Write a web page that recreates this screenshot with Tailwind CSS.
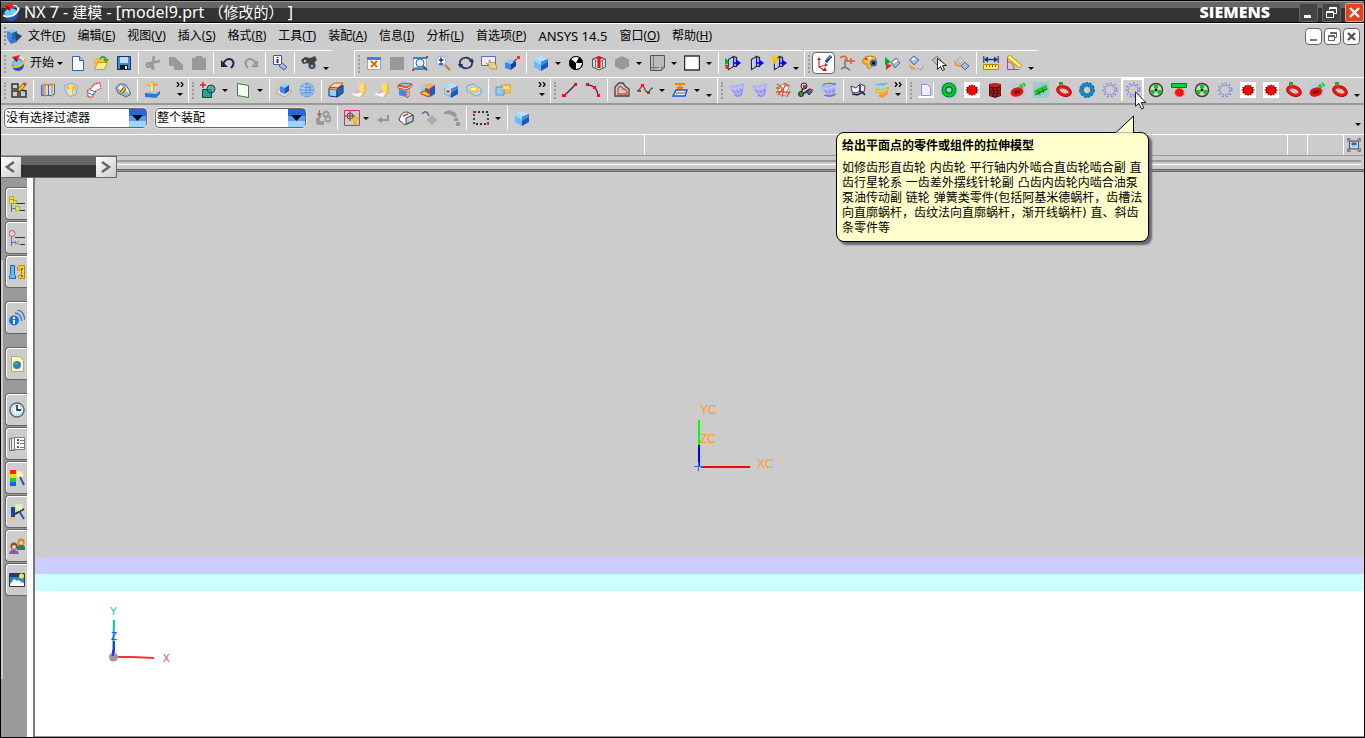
<!DOCTYPE html>
<html lang="zh-CN">
<head>
  <meta charset="UTF-8" />
  <meta name="viewport" content="width=device-width, initial-scale=1.0" />
  <title>NX 7 - 建模 - [model9.prt]</title>
  <script src="https://cdn.jsdelivr.net/npm/@tailwindcss/browser@4"></script>
</head>
<body class="bg-[#cccccc] text-black text-xs font-['Noto_Sans','Noto_Sans_CJK_SC',sans-serif]">
<div class="relative h-screen flex flex-col border border-black overflow-hidden">

  <!-- Title bar -->
  <header class="h-[22px] shrink-0 flex items-center bg-linear-to-b from-[#666666] from-30% to-[#333333] to-30% border-t border-t-[#999999] border-b border-b-black text-white">
    <svg data-icon="nx" viewBox="0 0 16 16" class="size-[18px] ml-px"></svg>
    <h1 class="ml-1 text-base leading-5 whitespace-pre">NX 7 - <span class="text-[15px]">建模</span> - [model9.prt <span class="text-[15px]">（修改的）</span> ]</h1>
    <span class="ml-auto mr-[29px] font-['Open_Sans'] font-extrabold text-base leading-5">SIEMENS</span>
    <div class="flex gap-1">
      <button aria-label="最小化" class="size-[19px] border border-[#666666] rounded-xs bg-[#444444]"><svg viewBox="0 0 17 17"><path fill="#fff" d="M4 11h7v3H4z"/></svg></button>
      <button aria-label="还原" class="size-[19px] border border-[#666666] rounded-xs bg-[#444444]"><svg viewBox="0 0 17 17" fill="none" stroke="#fff"><path d="M6.500 6V3.500h7v6H11M6 4.500h7M3.500 7.500h7v6h-7zM3 8.500h7"/></svg></button>
      <button aria-label="关闭" class="size-[19px] border border-[#ff9980] rounded-xs bg-[#dd4422]"><svg viewBox="0 0 17 17"><path stroke="#fff" stroke-width="2.400" d="M4 4l9 9M13 4l-9 9"/></svg></button>
    </div>
  </header>

  <!-- Menu bar -->
  <nav class="h-[27px] shrink-0 flex items-center border-t border-white pl-[3px] pr-1 pb-0.5">
    <span class="w-0.5 h-[18px] border-l-2 border-dotted border-[#888888]"></span>
    <svg data-icon="part" viewBox="0 0 16 16" class="size-4 mr-1.5"></svg>
    <div class="flex gap-3 whitespace-nowrap items-center">
      <a href="#">文件(<u>F</u>)</a>
      <a href="#">编辑(<u>E</u>)</a>
      <a href="#">视图(<u>V</u>)</a>
      <a href="#">插入(<u>S</u>)</a>
      <a href="#">格式(<u>R</u>)</a>
      <a href="#">工具(<u>T</u>)</a>
      <a href="#">装配(<u>A</u>)</a>
      <a href="#">信息(<u>I</u>)</a>
      <a href="#">分析(<u>L</u>)</a>
      <a href="#">首选项(<u>P</u>)</a>
      <a href="#" class="text-[13px] leading-4">ANSYS 14.5</a>
      <a href="#">窗口(<u>O</u>)</a>
      <a href="#">帮助(<u>H</u>)</a>
    </div>
    <div class="ml-auto flex gap-0.5">
      <button aria-label="最小化部件" class="size-[17px] border border-[#666666] rounded bg-white"><svg viewBox="0 0 15 15"><path fill="#777" d="M4 10h7v2H4z"/></svg></button>
      <button aria-label="还原部件" class="size-[17px] border border-[#666666] rounded bg-white"><svg viewBox="0 0 15 15" fill="none" stroke="#666"><path d="M5.500 5V3.500h6v5H10M3.500 6.500h6v5h-6zM3 7.500h7M5 4.500h6"/></svg></button>
      <button aria-label="关闭部件" class="size-[17px] border border-[#666666] rounded bg-white"><svg viewBox="0 0 15 15"><path stroke="#555" stroke-width="2.400" d="M4 4l7 7M11 4l-7 7"/></svg></button>
    </div>
  </nav>

  <!-- Toolbars: | separator, v drop-down, _ options, >> more -->
  <div class="h-[27px] shrink-0 flex gap-0.5">
    <div class="flex border-t border-white pl-[6px] pb-0.5 relative mr-5" data-items="start v new open save | cut copy paste | undo redo | info | binoculars _"></div>
    <div class="flex border-t border-l border-white pl-[7px] pb-0.5 relative" data-items="fit square zoombox zoom rotate pan persp | cube v bw section hex v sheet v white v | clipin clip clipnew _"></div>
    <div class="flex border-t border-l border-white pl-[7px] pb-0.5 relative" data-items="wcs* axes palette show hide pick swap | measure angle _"></div>
  </div>
  <div class="h-[28px] shrink-0 flex gap-0.5 border-t border-t-white border-b-2 border-b-[#999999]">
    <div class="flex pl-[6px] pb-px relative" data-items="sketch | datum bolt sweep | gauge | table - >>"></div>
    <div class="flex border-l border-white pl-[7px] pb-px relative" data-items="addshape v plane v | pad sphere | block sheet1 sheet1 trim pocket hole boss | unite - - >>"></div>
    <div class="flex border-l border-white pl-[7px] pb-px relative" data-items="line arc | offset spline v project v _"></div>
    <div class="flex border-l border-white pl-[7px] pb-px relative" data-items="surf surf mesh nodes surf2 | curve layers >>"></div>
    <div class="flex border-l border-white pl-[7px] pb-px relative" data-items="page greenring redgear redblock redgreen worm ring bluering dots dots^ wheel rack wheel dots redgear redgear ring redgreen ring _"></div>
  </div>

  <!-- Selection bar -->
  <div class="h-[29px] shrink-0 flex items-center pl-[3px] pb-[3px]">
    <div class="relative w-[143px] h-5 mr-2">
      <select aria-label="类型过滤器" class="appearance-none w-full h-5 bg-white border border-[#666666] rounded-sm text-xs leading-4 pl-px outline outline-white/50"><option>没有选择过滤器</option></select>
      <svg viewBox="0 0 17 18" class="absolute right-px top-px w-[17px] h-[18px] pointer-events-none"><path fill="#2468d8" d="M0 0h17v7H0z"/><path fill="#58a0ec" d="M0 7h17v5H0z"/><path fill="#9cd4fc" d="M0 12h17v6H0z"/><path d="M3 6h11L8.500 12z"/></svg>
    </div>
    <div class="relative w-[151px] h-5 mr-[5px]">
      <select aria-label="选择范围" class="appearance-none w-full h-5 bg-white border border-[#666666] rounded-sm text-xs leading-4 pl-px outline outline-white/50"><option>整个装配</option></select>
      <svg viewBox="0 0 17 18" class="absolute right-px top-px w-[17px] h-[18px] pointer-events-none"><path fill="#2468d8" d="M0 0h17v7H0z"/><path fill="#58a0ec" d="M0 7h17v5H0z"/><path fill="#9cd4fc" d="M0 12h17v6H0z"/><path d="M3 6h11L8.500 12z"/></svg>
    </div>
    <div class="flex h-[26px]" data-items="filter | snap n back solid undoaxis handles | rect v | cube"></div>
    <div class="flex h-[26px] ml-auto" data-items="_"></div>
  </div>

  <!-- Cue and status line -->
  <div class="h-[22px] shrink-0 flex border-t border-white border-b border-b-[#999999]">
    <div class="flex-1 border-r border-white"></div>
    <div class="flex-1 border-r border-white"></div>
    <div class="w-5 border-r border-white"></div>
    <div class="w-9 border-r border-white"></div>
    <button aria-label="全屏" class="w-5 flex items-center justify-center"><svg data-icon="full" viewBox="0 0 16 16" class="size-[14px]"></svg></button>
  </div>
  <div class="h-4 shrink-0 relative pt-1">
    <div class="h-[5px] mr-[3px] border-t-2 border-t-[#999999] border-b border-b-white"></div>
    <div class="h-[3px] mt-1 bg-[#999999] border-y border-[#666666]"></div>
    <div class="absolute left-0 top-0 z-10 w-[116px] h-[22px] flex border border-[#666666] border-l-0">
      <button aria-label="上一个" class="w-5 bg-linear-to-br from-white to-[#cccccc]"><svg viewBox="0 0 20 20"><path fill="none" stroke="#666" stroke-width="2.500" d="M13 5l-7 5 7 5"/></svg></button>
      <div class="flex-1 bg-linear-to-b from-[#666666] from-40% to-[#333333] to-40%"></div>
      <button aria-label="下一个" class="w-5 bg-linear-to-br from-white to-[#cccccc]"><svg viewBox="0 0 20 20"><path fill="none" stroke="#666" stroke-width="2.500" d="M6 5l7 5-7 5"/></svg></button>
    </div>
  </div>

  <main class="flex-1 min-h-0 flex">
    <!-- Resource bar -->
    <aside class="w-[26px] shrink-0 bg-[#999999] pl-1 pt-[15px] flex flex-col gap-px relative">
      <div class="absolute left-0 top-[88px] bottom-[58px] w-0.5 bg-[#cccccc]"></div>
      <button data-side="nav1"></button>
      <button data-side="nav2"></button>
      <button data-side="reuse"></button>
      <button data-side="web" class="mt-3"></button>
      <button data-side="globe" class="mt-3"></button>
      <button data-side="clock" class="mt-3"></button>
      <button data-side="list"></button>
      <button data-side="rainbow"></button>
      <button data-side="wand"></button>
      <button data-side="people"></button>
      <button data-side="picture"></button>
    </aside>
    <div class="w-2 shrink-0 bg-white border-r-2 border-[#777777]"></div>

    <!-- Graphics window -->
    <section class="flex-1 relative flex flex-col border-b border-[#999999]">
      <div class="flex-385 bg-[#cccccc]"></div>
      <div class="flex-17 bg-[#ccccff]"></div>
      <div class="flex-17 bg-[#ccffff]"></div>
      <div class="flex-145 bg-white"></div>
      <svg class="absolute left-1/2 top-56 -ml-[6px] w-[90px] h-[75px]" viewBox="0 0 90 75" fill="none">
        <path stroke="#00ff00" stroke-width="2" d="M5 24v26"/>
        <path stroke="#0000ff" stroke-width="2" d="M5 49v21"/>
        <path stroke="#ff0000" stroke-width="2" d="M7 71h49"/>
        <path stroke="#3366cc" d="M0 70.500h9M4.500 66v9"/>
        <g fill="#ff9933" class="font-['Liberation_Sans'] text-xs"><text x="6" y="18">YC</text><text x="6" y="47">ZC</text><text x="63" y="72">XC</text></g>
      </svg>
      <svg class="absolute left-[70px] bottom-[70px] w-[70px] h-[62px]" viewBox="0 0 70 62" fill="none">
        <path stroke="#00cc99" stroke-width="2" d="M9 16l-1 36"/>
        <path stroke="#3333ff" stroke-width="2" d="M9 37v15"/>
        <circle cx="8.500" cy="53" r="4.500" fill="#999999"/>
        <path stroke="#3333ff" stroke-width="2" d="M8 46v6"/>
        <path stroke="#ff3333" stroke-width="2" d="M13 53h14l22 1"/>
        <g class="font-['Liberation_Sans'] text-[10px]"><text x="5" y="11" fill="#00cc99">Y</text><text x="6" y="36" fill="#3333ff">Z</text><text x="58" y="58" fill="#ff3333">X</text></g>
      </svg>
    </section>
  </main>

  <!-- Tooltip -->
  <div role="tooltip" class="absolute z-20 left-[835px] top-[131px] w-[313px] rounded-lg border border-black bg-[#ffffcc] pl-[5px] py-[5px] leading-[15px] font-['DejaVu_Sans','Noto_Sans_CJK_SC',sans-serif] shadow-[3px_3px_2px_#666677]">
    <svg class="absolute right-[13px] -top-[18px] w-5 h-[19px]" viewBox="0 0 20 19"><path fill="#ffffcc" stroke="#000" d="M0 17.500h1L18.500 1v16.500"/><path stroke="#ffffcc" stroke-width="2" d="M1 18.500h17"/></svg>
    <p class="font-bold py-px mb-[6px]">给出平面点的零件或组件的拉伸模型</p>
    <p class="whitespace-nowrap">如修齿形直齿轮 内齿轮 平行轴内外啮合直齿轮啮合副 直<br>齿行星轮系 一齿差外摆线针轮副 凸齿内齿轮内啮合油泵<br>泵油传动副 链轮 弹簧类零件(包括阿基米德蜗杆，齿槽法<br>向直廓蜗杆，齿纹法向直廓蜗杆，渐开线蜗杆) 直、斜齿<br>条零件等</p>
  </div>

  <!-- Mouse pointer -->
  <svg class="absolute z-30 left-[1134px] top-[90px] w-3 h-[19px]" viewBox="0 0 12 19"><path fill="#fff" stroke="#223" d="M.5.800v14.500l3.400-3 2.600 5.700 2.300-1-2.600-5.500h4.600z"/></svg>
</div>

<script>
  const cube = '<path fill="#bdf" d="M1 3l8-2 6 3-7 3z"/><path fill="#6bf" d="M1 3l7 4v9l-7-4z"/><path fill="#25b" d="M8 7l7-3v8l-7 4z"/><path fill="#9df" d="M1 3l7 4v3L1 6z"/><path fill="#48d" d="M8 7l7-3v3l-7 4z"/>';
  const blade = '<path fill="#aaf" d="M0 4c5 0 10-1 15-3v4c-1 3-2 5-2 8-2 2-5 2-7 1 0-2-1-4-2-4C2 9 1 7 0 4z"/><path fill="#88e" d="M3 9c4 1 8 0 11-2l-1 6c-2 2-5 2-7 1 0-2-1-4-3-5z"/><path stroke="#dde" stroke-width=".6" fill="none" d="M1 6c5 1 10 0 14-2M5 11c3 1 5 1 8-1M5 4c0 3 3 6 4 10M10 3c-1 3 1 6 1 11"/>';
  const door = '<path fill="#dfe8ff" stroke="#225" stroke-width="1.200" d="M3.500 4.500l5-3v10l-5 3z"/><path fill="#9be" stroke="#225" stroke-width="1.200" d="M8.500 1.500l3 1v9l-3 0z"/><path fill="#bcd" d="M5 5l2-1v8l-2 1z"/><path stroke="#00f" stroke-width="1.500" d="M8 8h6"/><path fill="#00f" d="M12 5l4 3-4 3z"/>';
  const chip = '<path fill="#9be" stroke="#667" d="M6.500 7L11 3l4 5-5 5z"/><path stroke="#fff" stroke-width="2" d="M8 8l4-3"/>';
  const ring = '<ellipse cx="8" cy="9" rx="6.500" ry="4" fill="none" stroke="#900" stroke-width="3" transform="rotate(20 8 9)"/><ellipse cx="8" cy="9" rx="6" ry="3.500" fill="none" stroke="#f11" stroke-width="2.400" transform="rotate(20 8 9)"/>';
  const globe = '<circle cx="8" cy="10" r="6" fill="#25b"/><path fill="#6cf" d="M2 9c1-4 8-6 11-2 1 2-2 5-5 5s-5-1-6-3z"/><path fill="none" stroke="#fff" d="M10 2c3 0 4 2 4 4"/><path fill="#e22" d="M2 2l8-2-3 7z"/><path fill="#a00" d="M2 2l5 5 0-3z"/>';
  const star = 'M8 1l1.200 2.400L11.500 2l.2 2.600 2.800-.1-1.200 2.400L16 8l-2.500 1.200 1.200 2.500-2.700 0-.3 2.600-2.300-1.500L8 15l-1.300-2.200-2.300 1.500-.3-2.600-2.700 0 1.100-2.500L0 8l2.500-1.200L1.400 4.500l2.700.1.300-2.600 2.400 1.400z';

  const icons = {
    nx: globe + '<path fill="none" stroke="#eef" stroke-width="1.700" d="M1 11c6 3 13-1 14-7"/>',
    part: '<path fill="#8cf" d="M1 3l6-2 4 2-5 2z"/><path fill="#48d" d="M1 3l5 2v9l-5-3z"/><path fill="#26b" d="M6 5l5-2v9l-5 2z"/><path fill="#345" d="M9 4l7 4-6 6z"/><path fill="#37d" d="M2 12l8-1 1 3-6 2z"/>',
    start: globe + '<path fill="none" stroke="#fb2" stroke-width="1.700" d="M1 11c6 3 13-1 14-7"/>',
    new: '<path fill="#fff" stroke="#36a" d="M2.500 1.500h7l4 4v10h-11z"/><path fill="#9bf" stroke="#36a" d="M9.500 1.500v4h4"/>',
    open: '<path fill="#eb5" d="M1 5l2-2h4l1 2h5v9H2z"/><path fill="#fe8" stroke="#c92" d="M1.500 14.500l3-7h10l-3 7z"/><path fill="none" stroke="#3a2" stroke-width="2" d="M7 4c2-3 4-3 6 0"/><path fill="#3a2" d="M10 4h6l-3 4z"/>',
    save: '<path fill="#48c" stroke="#136" d="M1.500 1.500h13v13h-13z"/><path fill="#bdf" d="M4 2h8v6H4z"/><path fill="#113" d="M4 10h8v4H4z"/><path fill="#fff" d="M9 11h2v3H9z"/>',
    cut: '<path stroke="#999" stroke-width="2.500" d="M9 1L7 13M2 9l13-3"/><circle cx="3.500" cy="10" r="2" fill="none" stroke="#999" stroke-width="2"/><circle cx="8" cy="13" r="2" fill="#999"/>',
    copy: '<path fill="#999" d="M1 2h6l3 3v6H1zM6 6h5l4 4v5H6z"/>',
    paste: '<path fill="#999" d="M1 3h3l1-2h6l1 2h3v12H1z"/>',
    undo: '<path fill="none" stroke="#225" stroke-width="2" d="M3 9c2-5 6-6 9-4 2 2 2 5-1 8"/><path fill="#225" d="M1 5v7h7z"/>',
    redo: '<path fill="none" stroke="#999" stroke-width="2" d="M13 9c-2-5-6-6-9-4-2 2-2 5 1 8"/><path fill="#aaa" stroke="#888" d="M14.500 6v5.500H9z"/>',
    info: '<path fill="#fff" stroke="#557" d="M1.500.500h8v9h-8z"/><path stroke="#22a" stroke-width="2" d="M5.500 4v4M5.500 2v1"/><path fill="#9be" stroke="#557" d="M7 11l3-3 5 4-3 3z"/>',
    binoculars: '<path fill="#444" d="M0 5l4-3 5 1 5-2 2 4-3 3-4 1-4-1-3 1z"/><circle cx="4" cy="6" r="2" fill="#bcd" stroke="#222"/><circle cx="11" cy="10.500" r="3.500" fill="#345"/><circle cx="11" cy="11" r="1.500" fill="#8ab"/>',
    fit: '<path fill="#fff" stroke="#8ad" d="M1.500 2.500h13v12h-13z"/><path fill="#38d" d="M1 2h14v3H1z"/><path stroke="#e60" stroke-width="2" d="M5 6l6 6M11 6l-6 6"/>',
    square: '<path fill="#999" d="M1 2h14v13H1z"/>',
    zoombox: '<path fill="#fff" stroke="#8ad" d="M1.500 3.500h13v9h-13z"/><path fill="#38d" d="M1 2h14v2H1zM1 13h14v2H1z"/><circle cx="8" cy="8" r="4" fill="#def" stroke="#556"/><path stroke="#555" stroke-width="2" d="M11 11l4 4"/><path fill="#e22" d="M0 14h2v2H0zM14 1h2v2h-2z"/>',
    zoom: '<circle cx="6" cy="6" r="4.800" fill="#fff" stroke="#9be" stroke-width="1.500"/><path stroke="#136" stroke-width="1.500" d="M6 2.500v5M3.500 5h5M4 9h4"/><path stroke="#b84" stroke-width="2.400" d="M10 10l5 5"/>',
    rotate: '<path fill="none" stroke="#236" stroke-width="1.800" d="M2 9c-1-6 8-9 11-3M14 7c1 6-8 9-11 3"/><path fill="#236" d="M11 7h5l-2-4zM5 9H0l2 4z"/>',
    pan: '<path fill="#eef" stroke="#66a" d="M.5 1.500h14v9H.500z"/><path fill="#ec9" stroke="#a73" stroke-width=".7" d="M5 8l3 2V5l1 0 1 3 3-1 2 3 1 4h-6z"/>',
    persp: '<path fill="#8cf" d="M1 7l5-3 6 1-5 3z"/><path fill="#48d" d="M1 7l6 2v6l-6-2z"/><path fill="#149" d="M7 9l5-3v5l-5 4z"/><path stroke="#333" d="M9 7l5-4"/><path fill="#e32" d="M13 1h3v3h-3z"/>',
    cube,
    bw: '<circle cx="8" cy="8" r="7"/><path fill="#fff" d="M8 8L3 4c2-3 7-3 8-2L8 8l6 0c0 4-3 6-6 6z"/><circle cx="8" cy="8" r="6.500" fill="none" stroke="#000"/>',
    section: '<path fill="#ddd" stroke="#555" d="M1.500 4L8 1.500 14.500 4v8L8 15l-6.500-3z"/><path fill="none" stroke="#777" d="M1.500 4L8 7l6.500-3M4.500 6v7M11.500 6v7"/><path stroke="#e11" stroke-width="3" d="M8 4v9"/><path fill="#e11" d="M4 4l4-3 4 3z"/>',
    hex: '<path fill="#999" d="M1 4.500L8 1l7 3.500v7L8 15l-7-3.500z"/>',
    sheet: '<path fill="#bbb" stroke="#555" d="M1.500.500h14v12l-3 3h-11z"/><path fill="none" stroke="#777" d="M4.500 1v14M12.500 15v-3h3M2 12.500h8"/>',
    white: '<path fill="#fff" stroke="#333" stroke-width="1.500" d="M.5 1h15v14H.500z"/>',
    clip: door,
    clipin: door + '<path fill="#0a2" d="M0 3l5 4-5 3z"/><path fill="#e22" d="M0 10h4v4H1z"/>',
    clipnew: door + '<path stroke="#ec0" stroke-width="1.500" d="M4 0v9M0 4h8M1 1l6 6M7 1L1 7"/>',
    wcs: '<path fill="none" stroke="#c33" stroke-width="1.300" d="M3 5v7l5 3M3 12l7-2"/><path fill="#c22" d="M1 5l2-3 2 3zM6 16l5 0-2-4zM9 8l3 2-3 2z"/><path stroke="#247" stroke-width="3" d="M10 7l5-6"/><path stroke="#48d" stroke-width="2" d="M11 4l4-3"/>',
    axes: '<path fill="none" stroke="#777" stroke-width="1.500" d="M6 4v8l5 3M6 12l-4 2"/><path fill="none" stroke="#e52" stroke-width="1.500" d="M1 3c3-3 6-2 7 1v3M8 6h8M12 3v6"/>',
    palette: '<path fill="#fb3" stroke="#b70" d="M1 5c2-5 12-5 13-1s-3 3-4 6-2 4-4 3 1-4-2-4-4-1-3-4z"/><circle cx="4" cy="4" r="1.300" fill="#e33"/><circle cx="8" cy="3" r="1.300" fill="#fff"/><circle cx="11.500" cy="8" r="3.500" fill="#36b"/><circle cx="11.500" cy="8" r="1.500"/>',
    show: '<path fill="#0a2" d="M0 2l6 5-6 3z"/><path fill="#e22" d="M1 15l6-5-6-1z"/>' + chip,
    hide: '<path fill="#9be" stroke="#667" d="M1.500 5L6 1l5 4-5 5z"/><path stroke="#fff" stroke-width="2" d="M4 5l3-2"/><path fill="none" stroke="#e92" stroke-width="2" d="M2 10c0 3 3 4 5 3"/><path stroke="#88c" fill="none" stroke-dasharray="2 1" d="M9 13l4 2 3-5"/>',
    pick: '<path fill="#bbb" stroke="#888" d="M1 5l5-4 5 5-5 4z"/><path fill="#fff" stroke="#222" d="M6.500 3.500v11l3-3 2 4 2-1-2-4h4z"/>',
    swap: '<path stroke="#99c" stroke-dasharray="2 1" fill="none" d="M3 5l3-3 4 3-4 4z"/><path fill="none" stroke="#e92" stroke-width="2" d="M1 6c0 4 3 6 6 4"/><path fill="#9be" stroke="#667" d="M7 11l4-4 4 4-4 4z"/>',
    measure: '<path stroke="#124a" stroke-width="1.500" d="M.7 1v7M15.300 1v7"/><path stroke="#03a" stroke-width="1.500" d="M2 4.500h12"/><path fill="#03a" d="M1 4.500l4-3v6zM15 4.500l-4-3v6z"/><path fill="#fe6" stroke="#b80" d="M.5 9.500h15v5H.500z"/><path stroke="#850" d="M3.500 10v2M6.500 10v2M9.500 10v2M12.500 10v2"/>',
    angle: '<path fill="none" stroke="#c44" d="M1.500 2v12.500H13M2 7c4 0 6 3 6 7"/><path stroke="#b80" stroke-width="4.500" d="M2 1l13 11"/><path stroke="#fe7" stroke-width="3" d="M2.500 1.500l12 10"/>',
    sketch: '<path fill="none" stroke="#333" stroke-width="1.500" d="M1 2h6v5H1zM1 9h6v6H1zM9 8v7h6V9z"/><path stroke="#950" stroke-width="3.500" d="M7 9l7-7"/><path stroke="#fc3" stroke-width="2" d="M8 8l5-5"/><path fill="#e33" d="M13 0l3 2-2 2-2-2z"/>',
    datum: '<path fill="#cdf" stroke="#46a" d="M1.500 3.500l3-1h10v10l-3 1h-10z"/><path stroke="#e92" stroke-width="1.500" d="M5 1v14M12 1v14M4 3h10"/><path stroke="#46a" d="M3 4v9M8.500 3v10"/>',
    bolt: '<path fill="#bdf" stroke="#8ac" d="M1 4l7-3 7 3-2 8-5 3-5-4z"/><path fill="#fb4" d="M3 4h10v4l-3 1v6l-4-1V8L3 7z"/><path fill="#fe8" d="M6 4h3v9H6z"/>',
    sweep: '<path fill="#fff" d="M2 13c2-6 5-9 12-11l2 4c-6 1-9 4-11 9z"/><path fill="none" stroke="#e44" stroke-width="1.300" stroke-dasharray="2 1" d="M1 9l4-3 4-5 5 0 1 5-5 3-4 6-4 0z"/><path fill="none" stroke="#37a" d="M2 11l6 2M4 8l6 2"/>',
    gauge: '<path fill="#9bc" stroke="#567" d="M1 6c3-6 10-5 12 0l3 6-5 3-8-4z"/><path fill="#fff" d="M3 6l3-3 2 2-2 3zM10 5l3 2 1 4-3-2z"/><path stroke="#840" stroke-width="3.500" d="M6 11l4-5"/><path stroke="#fb3" stroke-width="2" d="M6 11l4-5"/>',
    table: '<path fill="#e92" d="M1 3l7-3 7 3-5 1v6H7V4z"/><path fill="#fe8" d="M7 3h2v8H7zM3 2l5-1 3 1-4 1z"/><path fill="#9cf" d="M1 11l5-2h10l-4 3z"/><path fill="#37c" d="M1 11l11 1v4l-11-1zM12 12l4-3v3l-4 4z"/>',
    addshape: '<path stroke="#d22" stroke-width="1.500" d="M0 3h6M3 0v6"/><path fill="#2aa098" stroke="#144" d="M2.500 7.500h9v8h-9z"/><circle cx="11" cy="7" r="4" fill="#2aa098" fill-opacity=".7" stroke="#144"/>',
    plane: '<path fill="#f4fff4" stroke="#474" d="M2.500 1.500l11 2v12l-11-2z"/>',
    pad: '<path fill="#cdf" stroke="#d96" d="M0 11l4-6 12 4-7 6z"/><path fill="#9cf" d="M4 4l5-3 4 2-4 3z"/><path fill="#48d" d="M4 4l5 2v6l-5-2z"/><path fill="#25a" d="M9 6l4-3v6l-4 3z"/>',
    sphere: '<circle cx="8" cy="8" r="7" fill="#9cf" stroke="#7ad"/><path fill="#bdf" d="M3 5l5-3v6H2z"/><path fill="none" stroke="#68c" d="M7 1v14M1 8h14M7 1c5 3 6 10 1 14M2 4c4 2 9 2 12 0M2 12c4-2 9-2 12 0"/>',
    block: '<path fill="#fda" stroke="#c52" d="M1 5l6-4h8l-5 5z"/><path fill="#9cf" stroke="#137" d="M1 6l8 1v8l-8-1z"/><path fill="#26b" stroke="#137" d="M9 7l6-4v8l-6 4z"/><path fill="#fff" stroke="#d42" d="M1 6h8v2L1 7z"/>',
    sheet1: '<path fill="#fd6" d="M8 1l6 1v8l-4 5-9-2c5-1 8-4 7-12z"/><path fill="#fff" d="M0 12l7-2 5 2-4 3z"/><path fill="#eab" d="M3 11l5-4 1 3-4 2z"/><path fill="none" stroke="#e92" d="M14 2v8l-4 5"/>',
    trim: '<path fill="#8cf" stroke="#c42" d="M1 3l5-2 9 1-5 3z"/><path fill="#fff" stroke="#d42" d="M1 4l9 2 5-4v2l-5 4-9-2z"/><path fill="#48d" d="M2 7l7 2v6l-7-2z"/><path fill="#fff" stroke="#c42" d="M10 8l2-2v8l-2 2z"/>',
    pocket: '<path fill="#fa5" d="M2 4l8-3 5 2-7 3z"/><path fill="#9cf" d="M1 5l2-1 6 2v2L5 7v3L1 9z"/><path fill="#b42" d="M5 6l5 1v5l-5-1z"/><path fill="#fb5" stroke="#a42" d="M1 10l4-1 4 2v4l-8-3z"/><path fill="#35b" d="M10 6l5-3v9l-5 3z"/>',
    hole: cube + '<circle cx="5" cy="9.500" r="2.500" fill="#d62" stroke="#fff"/>',
    boss: '<path fill="#bdf" stroke="#7ac" d="M1 4l7-2 7 5v5l-5 2-9-5z"/><ellipse cx="8" cy="7.500" rx="5" ry="3" fill="#fb4" transform="rotate(10 8 8)"/><ellipse cx="7.500" cy="7" rx="3" ry="1.600" fill="#ff9"/>',
    unite: '<path fill="#fb4" stroke="#e92" d="M6 3h10v8H6z"/><path fill="#8cf" fill-opacity=".8" stroke="#59c" d="M1 5h8v8H1z"/><path fill="#fd8" d="M8 4h6v3H8z"/>',
    line: '<path stroke="#333" stroke-width="1.500" d="M2 14L14 2"/><path fill="#e11" d="M0 12h4v3H0zM12 1h3v3h-3z"/>',
    arc: '<path fill="none" stroke="#333" stroke-width="1.500" d="M2 3c7 0 10 3 11 10"/><path fill="#e11" d="M1 1h3v3H1zM12 12h3v3h-3zM8 4h3v3H8z"/>',
    offset: '<path fill="none" stroke="#444" stroke-width="1.300" d="M1 14V5l4-4h4l2 3 4 3v7z"/><path fill="none" stroke="#d44" stroke-width="1.300" d="M4 12V7c1-4 4-3 5 0 3 0 4 2 4 5z"/>',
    spline: '<path fill="none" stroke="#555" stroke-width="1.300" d="M0 9c3 0 4-6 6-5s2 7 5 6 2-4 5-4"/><path fill="#d22" d="M4 2h3v3H4zM10 9h3v3h-3zM1 8h3v2H1z"/>',
    project: '<path stroke="#e80" stroke-width="2" d="M8 1v7M5 5l3 3 3-3M3 2h10"/><path fill="#def" stroke="#25c" stroke-width="1.500" d="M4 8h11l-2 6H1z"/><path fill="none" stroke="#c33" d="M4 12c3-3 5 1 9-2"/>',
    surf: blade,
    surf2: blade + '<path fill="none" stroke="#48b" stroke-width="1.300" d="M2 3c2-2 7-2 13-1M3 13c5 2 8 2 12-1"/>',
    mesh: '<path fill="#eee" stroke="#999" d="M3 5l5-3 6 3-4 9-6-2z"/><path fill="none" stroke="#d52" stroke-width="1.300" d="M1 6l4 0M2 2c3 2 6 3 5 6l-4 5M9 1l6 3M11 3c-4 3-2 6-4 12M1 10c6 0 9-1 14 1M15 9l-3 6"/>',
    nodes: '<path stroke="#333" stroke-width="1.500" d="M6 4L2 13M3 13l10-6"/><circle cx="6" cy="4" r="3" fill="#ddd" stroke="#222"/><path fill="#d22" d="M5 3h3v3H5z"/><circle cx="3" cy="12" r="2.500" fill="#484" stroke="#222"/><path fill="#55c" stroke="#225" d="M8 9l4-2 3 2-4 4z"/><path fill="#e33" d="M12 7h3v3h-3z"/>',
    curve: '<path fill="#eef" stroke="#445" d="M1 4l5 2 4-4 5 2-1 6-4-1-4 2-4-1z"/><path fill="none" stroke="#224" stroke-width="1.600" d="M2 12c4 0 4 2 7 0s4-2 6 1M10 3v7"/>',
    layers: '<path fill="#6bd" d="M1 3l7-2h8l-6 3z"/><path fill="#9de" d="M1 3l9 1v3L1 5z"/><path fill="#fc4" stroke="#da3" d="M3 7l7 1 5-3v3l-5 3-7-1z"/><path fill="#e94" d="M6 12l4 0 5-3v3l-5 4-4-1z"/>',
    page: '<path fill="#fff" d="M0 0h16v16H0z"/><path fill="#ccc" d="M0 0h15v14H0z"/><path fill="#eef" stroke="#89c" d="M3.500 2.500h6l3 3v8h-9z"/>',
    greenring: '<path fill="#acd" d="M0 0h16v16H0z"/><circle cx="8" cy="8" r="5" fill="#9cc" stroke="#063" stroke-width="5"/><circle cx="8" cy="8" r="5.200" fill="none" stroke="#0c2" stroke-width="3"/>',
    redgear: '<path fill="#fff" d="M0 0h16v16H0z"/><path fill="#700" transform="translate(1 1) scale(.88)" d="' + star + '"/><circle cx="8" cy="8" r="4.500" fill="#f00"/>',
    redblock: '<path fill="#611" d="M2 2h12v12l-6 2-6-2z"/><ellipse cx="8" cy="3" rx="6" ry="2" fill="#b22"/><path stroke="#b22" stroke-width="1.500" stroke-dasharray="2 2" d="M3 7h10M4 10h10M3 13h10"/>',
    redgreen: '<path fill="#bcd" d="M0 0h16v16H0z"/><ellipse cx="7" cy="10" rx="5" ry="3" fill="#711" stroke="#e11" stroke-width="3" transform="rotate(-15 7 10)"/><path stroke="#2c2" stroke-width="4" stroke-dasharray="3 1" d="M10 5l5-3"/>',
    worm: '<path fill="#9cc" d="M0 0h16v16H0z"/><path stroke="#2c2" stroke-width="5" d="M2 11l12-6"/><path stroke="#172" d="M2 13l12-6M5 8l2 5M9 6l2 5"/>',
    ring: ring + '<path fill="#2a2" d="M3 0h4v4H3z"/>',
    bluering: '<circle cx="8" cy="8" r="5.500" fill="none" stroke="#036" stroke-width="4.500" stroke-dasharray="2 1"/><circle cx="8" cy="8" r="5.500" fill="none" stroke="#18c" stroke-width="3.500"/>',
    dots: '<circle cx="8" cy="8" r="5" fill="none" stroke="#66e" stroke-dasharray="2 1"/><circle cx="8" cy="8" r="6.800" fill="none" stroke="#77e" stroke-width="1.500" stroke-dasharray="1.500 2.500"/>',
    wheel: '<circle cx="8" cy="8" r="6.500" fill="#cdc" stroke="#533" stroke-width="1.500"/><circle cx="8" cy="4.500" r="2.300" fill="#0c2"/><circle cx="4.500" cy="10" r="2.300" fill="#0c2"/><circle cx="11.500" cy="10" r="2.300" fill="#0c2"/><circle cx="8" cy="8" r="1.500" fill="#400"/>',
    rack: '<path fill="#0d2" stroke="#073" d="M.5 1.500h15v4H.500z"/><path fill="#f11" transform="translate(3 5) scale(.68)" d="' + star + '"/><circle cx="8.400" cy="10.500" r="4" fill="#f11"/>',
    filter: '<path fill="#999" d="M1 8h4v3h4v4H3l-2-2zM3 3h3v5H3z"/><path stroke="#966" d="M4.500 0v6M2 4h5"/><circle cx="11" cy="4" r="2.500" fill="none" stroke="#999" stroke-width="2"/><circle cx="13" cy="9" r="2.500" fill="none" stroke="#999" stroke-width="2"/>',
    snap: '<path fill="none" stroke="#c36" d="M.5.500h15v15H.500z"/><circle cx="6" cy="6" r="3" fill="none" stroke="#833"/><path stroke="#833" d="M6 1v10M1 6h10"/><path fill="#fc2" stroke="#b80" stroke-width=".5" d="M7 8h8l-3 3v4h-2v-4z"/>',
    back: '<path fill="none" stroke="#899" stroke-width="2" d="M13 5v5H5"/><path fill="#899" d="M2 10l5-3v6z"/>',
    solid: '<path fill="#fff" stroke="#444" d="M1 10c2-6 4-8 8-8l6 3v6l-8 4z"/><path fill="#bcd" stroke="#444" d="M8 14V8l7-3v6z"/><path stroke="#d33" stroke-width="1.500" d="M5 6l5-2"/>',
    undoaxis: '<path fill="none" stroke="#668" stroke-width="1.500" d="M1 4c3-4 6-2 7 2"/><circle cx="11" cy="10" r="3" fill="none" stroke="#999"/><path stroke="#999" d="M11 5v10M6 10h10"/>',
    handles: '<path fill="#999" d="M0 2l6-2 6 3 1 4h-4C8 4 4 4 0 4zM10 8h4v3h-4zM12 12h4v4h-4z"/>',
    rect: '<path fill="none" stroke="#000" stroke-width="1.300" stroke-dasharray="2 2" d="M1 2h14v12H1z"/><path fill="#d22" d="M0 1h2v2H0zM14 13h2v2h-2z"/>',
    full: '<path fill="none" stroke="#666" stroke-width="1.500" d="M1 4V1h3M12 1h3v3M15 12v3h-3M4 15H1v-3"/><path fill="#fff" stroke="#555" stroke-width="1.500" d="M3 3.500h10v9H3z"/><path fill="#26c" d="M5 5h6v3H5z"/><path fill="#8cf" d="M5 8h6v3H5z"/>',
    nav1: '<path fill="none" stroke="#66a" d="M2.500 7v9M3 12.500h4"/><path stroke="#333" d="M6 7.500h10M11 14.500h5"/><path fill="#ee2" stroke="#993" stroke-width=".7" d="M.5.500h4v3h-4zM.5 3.500h4v4h-4zM4.500 4.500h3v3h-3zM6.500 10.500h4v4h-4z"/>',
    nav2: '<path fill="none" stroke="#66a" d="M2.500 7v9M3 12.500h4"/><path stroke="#333" d="M6 7.500h10M11 14.500h5"/><circle cx="3" cy="3.500" r="3" fill="#ecc" stroke="#a66"/><path stroke="#b77" stroke-width="1.500" stroke-dasharray="1 1" d="M6 11l4 4M10 11l-4 4"/>',
    reuse: '<path fill="#6bf" stroke="#26a" d="M1.500 1.500h4v9l1 1v3h-6v-3l1-1z"/><path fill="#fc3" stroke="#b80" d="M8.500 3l2-1.500h5v13h-5l-2-2 4-2V6h-4z"/><path fill="#a60" d="M12 4h2v2h-2zM12 11h2v2h-2z"/>',
    web: '<circle cx="5" cy="10.500" r="5" fill="#17d"/><path stroke="#fff" stroke-width="2" d="M5 10v4M5 7v2"/><path fill="none" stroke="#47c" stroke-width="1.300" d="M6 3c4 0 6 3 7 8M8 0c4 0 7 4 8 10"/>',
    globe: '<path fill="#ffa" stroke="#aa8" d="M2.500.500h8l4 4v11h-12z"/><circle cx="8" cy="9" r="4" fill="#37d"/><path fill="#3b5" d="M6 6l3 1-1 3-3-1z"/>',
    clock: '<circle cx="8" cy="8" r="7" fill="#dff" stroke="#667" stroke-width="1.500"/><path stroke="#000" stroke-width="1.300" fill="none" d="M8 3v5h4"/><circle cx="8" cy="8" r="5" fill="none" stroke="#88a" stroke-dasharray="1 1.600"/>',
    list: '<path fill="#eee" stroke="#777" d="M.5 2.500h5v12h-5z"/><path fill="#eee" stroke="#777" d="M2.500 2h4v12h-4z"/><path fill="#fff" stroke="#779" d="M5.500 1.500h10v12h-10z"/><path fill="#35d" d="M8 3h2v2H8z"/><path fill="#3a3" d="M8 6h2v2H8z"/><path fill="#d33" d="M8 10h2v2H8z"/><path stroke="#777" d="M11 4.500h4M11 7.500h4M11 11.500h4"/>',
    rainbow: '<path fill="#f20" d="M1 0h6v4H1z"/><path fill="#fd0" d="M1 4h6v4H1z"/><path fill="#2c3" d="M1 8h6v4H1z"/><path fill="#06f" d="M1 12h6v4H1z"/><path stroke="#ffa" stroke-width="1.500" d="M10 1v8M7 5h8M8 2l5 5M13 2L8 7"/><path stroke="#44a" stroke-width="2" d="M11 7l4 8"/>',
    wand: '<path fill="#248" d="M2 3h4v11H2z"/><path stroke="#222" stroke-width="2" d="M6 10l9-5"/><path stroke="#35a" stroke-width="2" d="M10 7l5 8"/><path stroke="#dfa" stroke-width="1.500" d="M10 0v7M6 3h8M7 0l6 6M13 0L7 6"/><path fill="#ec3" d="M1 13h5v2H1z"/>',
    people: '<circle cx="12" cy="4" r="3.500" fill="#c82"/><circle cx="12" cy="5" r="2" fill="#fc8"/><path fill="#284" d="M8 9c1-3 7-3 8 0v3H8z"/><circle cx="5" cy="8" r="3.500" fill="#753"/><circle cx="5" cy="9" r="2" fill="#fca"/><path fill="#85c" d="M0 16c0-6 9-6 10 0z"/>',
    picture: '<path fill="#38c" stroke="#335" d="M.5 1.500h15v13H.500z"/><path fill="#147" d="M1 2h14v3H1z"/><path fill="#fff" d="M1 12l2-2 2-3 3 2 2-1 2 2 3 1v3H1z"/><circle cx="12.500" cy="4" r="2.500" fill="#fe2"/>'
  };

  const svg = name => `<svg viewBox="0 0 16 16" class="size-4 shrink-0">${icons[name]}</svg>`;
  const arrow = '<svg viewBox="0 0 6 3" class="w-[6px] h-[3px]"><path d="M0 0h6L3 3z"/></svg>';

  function item(token) {
    if (token === '|') return '<span class="w-[6px] pl-[3px] py-px"><i class="block h-full w-px bg-white"></i></span>';
    if (token === '-') return '<span class="w-[11px]"></span>';
    if (token === 'v') return `<button aria-label="更多选项" class="w-3 flex items-center justify-center">${arrow}</button>`;
    if (token === 'n') return `<button aria-label="更多选项" class="w-2 flex items-center">${arrow}</button>`;
    if (token === '_') return `<button aria-label="工具条选项" class="w-3 flex items-end justify-center pb-[5px]">${arrow}</button>`;
    if (token === '>>') return `<button aria-label="更多按钮" class="w-3 flex flex-col items-center justify-between pt-1 pb-[6px]"><svg viewBox="0 0 8 5" class="w-2 h-[5px]"><path fill="none" stroke="#000" stroke-width="1.300" d="M1 0l2 2.500L1 5M5 0l2 2.500L5 5"/></svg>${arrow}</button>`;
    if (token === 'start') return `<button class="flex items-center pl-[3px] gap-1">${svg('start')}<span class="w-6 whitespace-nowrap">开始</span></button>`;
    if (token.endsWith('*')) return `<button class="w-[23px] my-px flex items-center justify-center rounded-sm border border-[#666666] bg-white">${svg(token.slice(0, -1))}</button>`;
    if (token.endsWith('^')) return `<button class="w-[23px] flex items-center justify-center rounded-xs border-2 border-white border-b-[#cccccc]">${svg(token.slice(0, -1))}</button>`;
    return `<button class="w-[23px] flex items-center justify-center">${svg(token)}</button>`;
  }

  const grip = '<i class="absolute left-[3px] top-1 bottom-1 border-l-2 border-dotted border-[#999999]"></i>';
  document.querySelectorAll('[data-items]').forEach(el => {
    el.innerHTML = (el.classList.contains('relative') ? grip : '') + el.dataset.items.split(' ').map(item).join('');
  });
  document.querySelectorAll('[data-icon]').forEach(el => { el.innerHTML = icons[el.dataset.icon]; });
  document.querySelectorAll('[data-side]').forEach(el => {
    el.className += ' h-[33px] shrink-0 flex items-center pl-[3px] rounded-l border border-r-0 border-[#666666] bg-[#cccccc] shadow-[inset_1px_1px_0_#ffffff] overflow-hidden';
    el.innerHTML = svg(el.dataset.side);
  });
</script>
</body>
</html>
